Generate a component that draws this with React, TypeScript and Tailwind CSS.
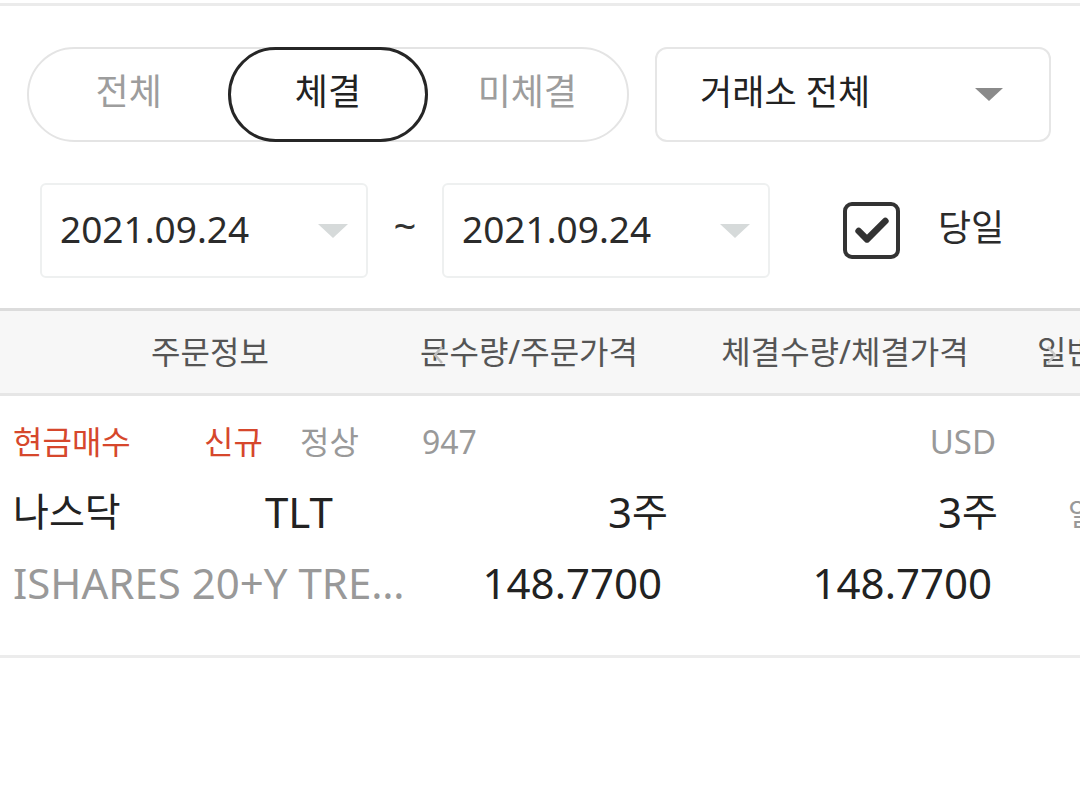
import { Check } from 'lucide-react'

const font = "font-['Noto_Sans','Noto_Sans_CJK_KR',sans-serif]"

function Caret({ color, w = 30, h = 14 }: { color: string; w?: number; h?: number }) {
  return (
    <svg width={w} height={h} viewBox={`0 0 ${w} ${h}`}>
      <polygon points={`0,0 ${w},0 ${w / 2},${h}`} fill={color} />
    </svg>
  )
}

function DateBox({ value }: { value: string }) {
  return (
    <div className="flex h-[95px] w-[328px] shrink-0 items-center justify-between rounded-[6px] border-2 border-[#eef0f0] pl-[18px] pr-[18px]">
      <span className="pb-[5px] text-[37px] leading-none text-[#2b2b2b]">{value}</span>
      <Caret color="#d6dada" />
    </div>
  )
}

export default function App() {
  const tabs = ['전체', '체결', '미체결']
  const active = 1

  return (
    <div className={`${font} h-[785px] w-[1080px] overflow-hidden bg-white`}>
      {/* top divider */}
      <div className="mt-[3px] h-[3px] bg-[#ebebeb]" />

      {/* filter row */}
      <div className="mt-[41px] flex items-center pl-[27px]">
        <div className="grid h-[95px] w-[602px] shrink-0 grid-cols-3 rounded-full border-2 border-[#e4e4e4]">
          {tabs.map((t, i) => (
            <div
              key={t}
              className={
                i === active
                  ? '-my-[2px] flex items-center justify-center rounded-full border-[3px] border-[#262626] pb-[6px] text-[36px] leading-none text-[#222]'
                  : 'flex items-center justify-center pb-[6px] text-[36px] leading-none text-[#9d9d9d]'
              }
            >
              {t}
            </div>
          ))}
        </div>
        <div className="ml-[26px] flex h-[95px] w-[396px] shrink-0 items-center justify-between rounded-[12px] border-2 border-[#e6e6e6] pl-[43px] pr-[46px]">
          <span className="pb-[6px] text-[35px] leading-none text-[#222]">거래소 전체</span>
          <Caret color="#8a8a8a" w={28} h={13} />
        </div>
      </div>

      {/* date row */}
      <div className="mt-[41px] flex items-center pl-[40px]">
        <DateBox value="2021.09.24" />
        <div className="w-[74px] shrink-0 pb-[10px] text-center text-[40px] leading-none text-[#333]">~</div>
        <DateBox value="2021.09.24" />
        <div className="ml-[73px] flex h-[57px] w-[57px] shrink-0 items-center justify-center rounded-[9px] border-4 border-[#333]">
          <Check size={40} strokeWidth={4} className="text-[#333]" />
        </div>
        <span className="ml-[38px] pb-[6px] text-[36px] leading-none text-[#2b2b2b]">당일</span>
      </div>

      {/* table */}
      <div className="mt-[30px] border-t-[3px] border-[#dcdcdc]">
        {/* header */}
        <div className="relative flex h-[85px] items-center border-b-[3px] border-[#e6e6e6] bg-[#f7f7f7] text-[32px] text-[#555]">
          <div className="w-[420px] shrink-0 text-center">주문정보</div>
          <div className="w-[260px] shrink-0">문수량/주문가격</div>
          <div className="w-[330px] shrink-0 text-center">체결수량/체결가격</div>
          <div className="shrink-0 whitespace-nowrap pl-[27px]">일반</div>
          <svg className="absolute left-[432px] top-[34px]" width="12" height="20" viewBox="0 0 12 20">
            <polyline points="10,2 3,10 10,18" fill="none" stroke="#bdbdbd" strokeWidth="2.5" />
          </svg>
          <svg className="absolute left-[1046px] top-[34px]" width="12" height="20" viewBox="0 0 12 20">
            <polyline points="2,2 9,10 2,18" fill="none" stroke="#c8c8c8" strokeWidth="2.5" />
          </svg>
        </div>

        {/* body */}
        <div className="flex border-b-[3px] border-[#ececec] pb-[45px] pt-[20px]">
          <div className="w-[420px] shrink-0 pl-[13px] pr-[10px]">
            <div className="flex h-[52px] items-center text-[32px]">
              <span className="w-[191px] shrink-0 text-[#d6472c]">현금매수</span>
              <span className="w-[96px] shrink-0 text-[#d6472c]">신규</span>
              <span className="text-[#999]">정상</span>
            </div>
            <div className="flex h-[86px] items-center text-[#222]">
              <span className="w-[252px] shrink-0 text-[39px]">나스닥</span>
              <span className="text-[42px]">TLT</span>
            </div>
            <div className="flex h-[56px] items-center text-[42px] text-[#999]">
              <span className="truncate">ISHARES 20+Y TREASURY BOND ETF</span>
            </div>
          </div>
          <div className="w-[260px] shrink-0 pr-[12px]">
            <div className="flex h-[52px] items-center pl-[2px] text-[32px] text-[#999]">947</div>
            <div className="flex h-[86px] items-center justify-end text-[#222]">
              <span className="text-[42px]">3</span>
              <span className="text-[39px]">주</span>
            </div>
            <div className="flex h-[56px] items-center justify-end pr-[6px] text-[42px] text-[#222]">148.7700</div>
          </div>
          <div className="w-[330px] shrink-0 pr-[12px]">
            <div className="flex h-[52px] items-center justify-end pr-[2px] text-[33px] text-[#999]">USD</div>
            <div className="flex h-[86px] items-center justify-end text-[#222]">
              <span className="text-[42px]">3</span>
              <span className="text-[39px]">주</span>
            </div>
            <div className="flex h-[56px] items-center justify-end pr-[6px] text-[42px] text-[#222]">148.7700</div>
          </div>
          <div className="flex shrink-0 items-center whitespace-nowrap pl-[58px] text-[30px] text-[#999]">일반</div>
        </div>
      </div>
    </div>
  )
}
